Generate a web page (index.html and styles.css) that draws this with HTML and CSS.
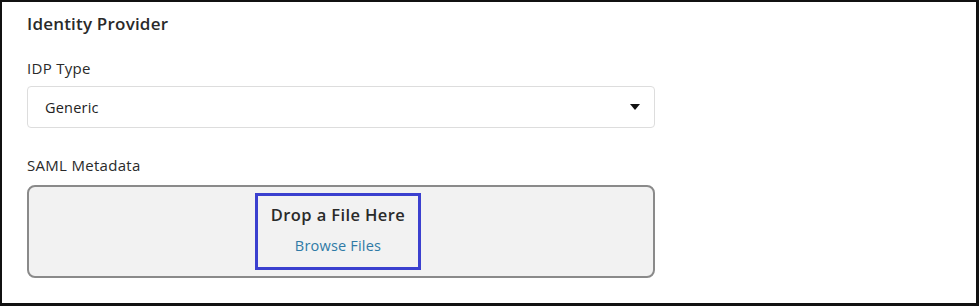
FILE: index.html
```html
<!DOCTYPE html>
<html>
<head>
<meta charset="utf-8">
<link rel="stylesheet" href="styles.css">
</head>
<body>
<div class="frame">
  <h2 class="title">Identity Provider</h2>
  <div class="field">
    <label class="label">IDP Type</label>
    <div class="select">
      <span>Generic</span>
      <svg class="caret" width="10" height="6" viewBox="0 0 10 6"><path d="M0 0H10L5 6Z" fill="#111"/></svg>
    </div>
  </div>
  <div class="field saml">
    <label class="label">SAML Metadata</label>
    <div class="dropzone">
      <div class="droptarget">
        <div class="drop-title">Drop a File Here</div>
        <div class="browse">Browse Files</div>
      </div>
    </div>
  </div>
</div>
</body>
</html>
```
FILE: styles.css
```css
* { box-sizing: border-box; }
html, body { margin: 0; padding: 0; background: #fff; }
body { font-family: "Open Sans", Lato, sans-serif; color: #222; font-variant-ligatures: none; }
.frame {
  width: 979px;
  height: 306px;
  border: 2px solid #111;
  border-right-width: 3px;
  border-bottom-width: 3px;
  padding: 11px 0 0 25px;
}
.title {
  margin: 0;
  font-size: 17px;
  font-weight: 600;
  letter-spacing: 0.2px;
  line-height: 22px;
  color: #2a2a2a;
}
.field { width: 628px; }
.label {
  display: block;
  font-size: 15px;
  letter-spacing: 0.3px;
  line-height: 18px;
  color: #2a2a2a;
}
.field:first-of-type { margin-top: 24px; }
.field .label { margin-bottom: 9px; }
.select {
  height: 42px;
  border: 1px solid #ddd;
  border-radius: 4px;
  display: flex;
  align-items: center;
  justify-content: space-between;
  padding: 0 14px 0 17px;
  font-size: 14.5px;
  letter-spacing: 0.2px;
  color: #222;
}
.saml { margin-top: 28px; }
.saml .label { margin-bottom: 11px; }
.dropzone {
  height: 93px;
  background: #f2f2f2;
  border: 2px solid #8a8a8a;
  border-radius: 8px;
  display: flex;
  justify-content: center;
  padding-top: 6px;
  padding-right: 6px;
}
.droptarget {
  width: 166px;
  height: 77px;
  border: 3px solid #3b40cf;
  display: flex;
  flex-direction: column;
  align-items: center;
  padding-top: 9px;
}
.drop-title {
  font-size: 16.5px;
  font-weight: 600;
  letter-spacing: 0.4px;
  line-height: 20px;
  color: #2a2a2a;
}
.browse {
  margin-top: 12px;
  font-size: 14.5px;
  letter-spacing: 0.2px;
  line-height: 18px;
  color: #2f7aa6;
}
```
